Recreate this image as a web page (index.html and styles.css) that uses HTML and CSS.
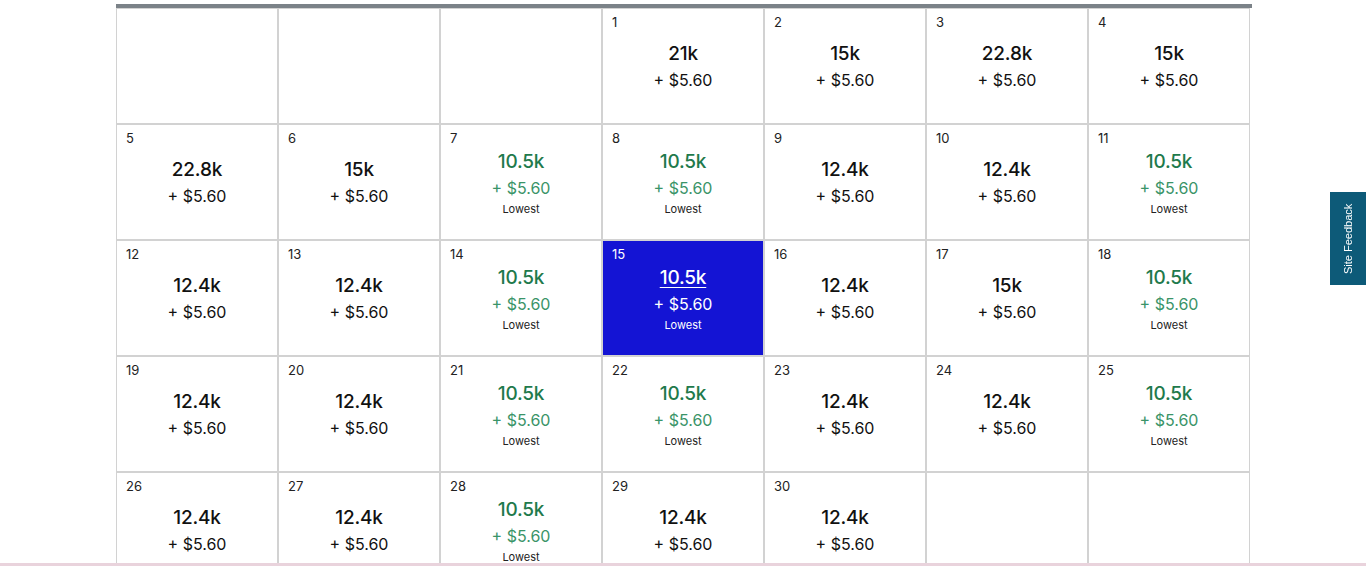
FILE: index.html
```html
<!DOCTYPE html>
<html lang="en">
<head>
<meta charset="utf-8">
<title>Calendar</title>
<link rel="stylesheet" href="styles.css">
</head>
<body>
<main class="cal">
  <div class="grid">
    <div class="cell"></div>
    <div class="cell"></div>
    <div class="cell"></div>
    <div class="cell"><span class="day">1</span><div class="fare"><span class="pts">21k</span><span class="fee">+ $5.60</span></div></div>
    <div class="cell"><span class="day">2</span><div class="fare"><span class="pts">15k</span><span class="fee">+ $5.60</span></div></div>
    <div class="cell"><span class="day">3</span><div class="fare"><span class="pts">22.8k</span><span class="fee">+ $5.60</span></div></div>
    <div class="cell"><span class="day">4</span><div class="fare"><span class="pts">15k</span><span class="fee">+ $5.60</span></div></div>

    <div class="cell"><span class="day">5</span><div class="fare"><span class="pts">22.8k</span><span class="fee">+ $5.60</span></div></div>
    <div class="cell"><span class="day">6</span><div class="fare"><span class="pts">15k</span><span class="fee">+ $5.60</span></div></div>
    <div class="cell low"><span class="day">7</span><div class="fare"><span class="pts">10.5k</span><span class="fee">+ $5.60</span><span class="tag">Lowest</span></div></div>
    <div class="cell low"><span class="day">8</span><div class="fare"><span class="pts">10.5k</span><span class="fee">+ $5.60</span><span class="tag">Lowest</span></div></div>
    <div class="cell"><span class="day">9</span><div class="fare"><span class="pts">12.4k</span><span class="fee">+ $5.60</span></div></div>
    <div class="cell"><span class="day">10</span><div class="fare"><span class="pts">12.4k</span><span class="fee">+ $5.60</span></div></div>
    <div class="cell low"><span class="day">11</span><div class="fare"><span class="pts">10.5k</span><span class="fee">+ $5.60</span><span class="tag">Lowest</span></div></div>

    <div class="cell"><span class="day">12</span><div class="fare"><span class="pts">12.4k</span><span class="fee">+ $5.60</span></div></div>
    <div class="cell"><span class="day">13</span><div class="fare"><span class="pts">12.4k</span><span class="fee">+ $5.60</span></div></div>
    <div class="cell low"><span class="day">14</span><div class="fare"><span class="pts">10.5k</span><span class="fee">+ $5.60</span><span class="tag">Lowest</span></div></div>
    <div class="cell low selected"><span class="day">15</span><div class="fare"><span class="pts">10.5k</span><span class="fee">+ $5.60</span><span class="tag">Lowest</span></div></div>
    <div class="cell"><span class="day">16</span><div class="fare"><span class="pts">12.4k</span><span class="fee">+ $5.60</span></div></div>
    <div class="cell"><span class="day">17</span><div class="fare"><span class="pts">15k</span><span class="fee">+ $5.60</span></div></div>
    <div class="cell low"><span class="day">18</span><div class="fare"><span class="pts">10.5k</span><span class="fee">+ $5.60</span><span class="tag">Lowest</span></div></div>

    <div class="cell"><span class="day">19</span><div class="fare"><span class="pts">12.4k</span><span class="fee">+ $5.60</span></div></div>
    <div class="cell"><span class="day">20</span><div class="fare"><span class="pts">12.4k</span><span class="fee">+ $5.60</span></div></div>
    <div class="cell low"><span class="day">21</span><div class="fare"><span class="pts">10.5k</span><span class="fee">+ $5.60</span><span class="tag">Lowest</span></div></div>
    <div class="cell low"><span class="day">22</span><div class="fare"><span class="pts">10.5k</span><span class="fee">+ $5.60</span><span class="tag">Lowest</span></div></div>
    <div class="cell"><span class="day">23</span><div class="fare"><span class="pts">12.4k</span><span class="fee">+ $5.60</span></div></div>
    <div class="cell"><span class="day">24</span><div class="fare"><span class="pts">12.4k</span><span class="fee">+ $5.60</span></div></div>
    <div class="cell low"><span class="day">25</span><div class="fare"><span class="pts">10.5k</span><span class="fee">+ $5.60</span><span class="tag">Lowest</span></div></div>

    <div class="cell"><span class="day">26</span><div class="fare"><span class="pts">12.4k</span><span class="fee">+ $5.60</span></div></div>
    <div class="cell"><span class="day">27</span><div class="fare"><span class="pts">12.4k</span><span class="fee">+ $5.60</span></div></div>
    <div class="cell low"><span class="day">28</span><div class="fare"><span class="pts">10.5k</span><span class="fee">+ $5.60</span><span class="tag">Lowest</span></div></div>
    <div class="cell"><span class="day">29</span><div class="fare"><span class="pts">12.4k</span><span class="fee">+ $5.60</span></div></div>
    <div class="cell"><span class="day">30</span><div class="fare"><span class="pts">12.4k</span><span class="fee">+ $5.60</span></div></div>
    <div class="cell"></div>
    <div class="cell"></div>
  </div>
</main>
<a class="feedback" href="#">Site Feedback</a>
<div class="bottom-line"></div>
</body>
</html>
```
FILE: styles.css
```css
html, body {
  margin: 0;
  padding: 0;
  background: #ffffff;
  overflow: hidden;
}

body {
  font-family: Inter, "Liberation Sans", Arial, sans-serif;
  color: #111111;
}

.cal {
  width: 1136px;
  margin: 0 auto;
  padding-top: 4px;
}

.grid {
  display: grid;
  grid-template-columns: repeat(7, 162px);
  grid-auto-rows: 116px;
  border-top: 4px solid #7b8288;
  width: 1136px;
  margin-left: 1px;
}

.cell {
  box-sizing: border-box;
  border: 1px solid #d2d2d2;
  display: grid;
  grid-template-columns: 1fr;
  grid-template-rows: 1fr;
  background: #ffffff;
}

.cell > * {
  grid-area: 1 / 1;
}

.day {
  align-self: start;
  justify-self: start;
  padding: 5px 0 0 9px;
  font-size: 13px;
  line-height: 16px;
  color: #222222;
}

.fare {
  align-self: center;
  justify-self: center;
  display: flex;
  flex-direction: column;
  align-items: center;
  text-align: center;
  margin-top: 2px;
}

.pts {
  font-size: 19px;
  font-weight: 500;
  line-height: 26px;
  letter-spacing: -0.2px;
}

.fee {
  font-size: 16px;
  line-height: 26px;
}

.tag {
  font-size: 11px;
  line-height: 17px;
  color: #222222;
}

.low .pts {
  color: #1f7a4c;
}

.low .fee {
  color: #3a9468;
}

.selected {
  background: #1414d4;
}

.selected .day,
.selected .pts,
.selected .fee,
.selected .tag {
  color: #ffffff;
}

.selected .pts {
  text-decoration: underline;
  text-underline-offset: 3px;
  text-decoration-thickness: 1px;
}

.feedback {
  position: fixed;
  right: 0;
  top: 192px;
  width: 36px;
  height: 93px;
  background: #0d5a78;
  color: #ffffff;
  text-decoration: none;
  font-family: "Liberation Sans", Arial, sans-serif;
  font-size: 11px;
  display: flex;
  align-items: center;
  justify-content: center;
  writing-mode: vertical-rl;
  transform: rotate(180deg);
}

.bottom-line {
  position: fixed;
  left: 0;
  right: 0;
  bottom: 0;
  height: 3px;
  background: #e9d3dc;
}
```
